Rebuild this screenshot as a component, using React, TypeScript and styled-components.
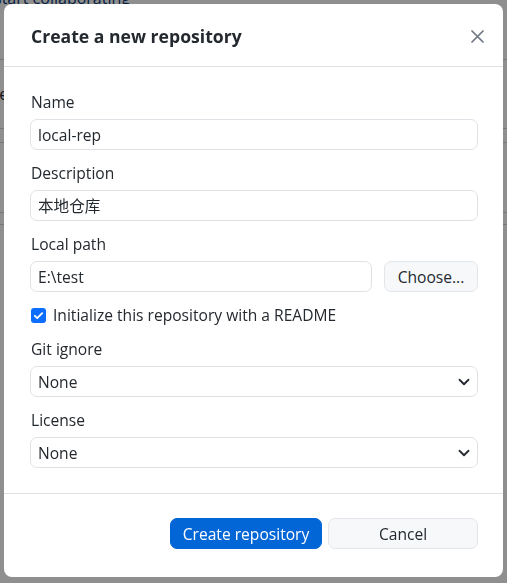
import React from "react";
import styled, { createGlobalStyle } from "styled-components";

const Global = createGlobalStyle`
  html, body { margin: 0; padding: 0; }
  body {
    font-family: "Open Sans", "Noto Sans", "Noto Sans CJK SC", sans-serif;
    color: #24292f;
    background: #fff;
    width: 507px;
    height: 583px;
    overflow: hidden;
  }
  * { box-sizing: border-box; }
`;

const FONT = `"Open Sans", "Noto Sans", "Noto Sans CJK SC", sans-serif`;

const Page = styled.div`
  width: 507px;
  height: 583px;
  overflow: hidden;
`;

const PageHead = styled.div`
  margin: -12px 0 0 -6px;
  font-size: 16px;
  line-height: 20px;
  color: #0b3b74;
`;

const PageList = styled.div`
  margin-top: 51px;
  margin-left: -20px;
  display: flex;
  flex-direction: column;
`;

const PageItem = styled.div<{ $h: number }>`
  height: ${(p) => p.$h}px;
  border-top: 1px solid #d0d7de;
  font-size: 16px;
  display: flex;
  align-items: center;
`;

const Overlay = styled.div`
  position: fixed;
  inset: 0;
  background: rgba(0, 0, 0, 0.44);
  padding: 4px 4px 6px 4px;
  display: flex;
`;

const Dialog = styled.div`
  flex: 1;
  background: #fff;
  border-radius: 8px;
  display: flex;
  flex-direction: column;
  overflow: hidden;
`;

const Header = styled.div`
  height: 63px;
  border-bottom: 1px solid #dde1e5;
  display: flex;
  align-items: center;
  justify-content: space-between;
  padding: 2px 16px 0 27px;
`;

const Title = styled.h1`
  margin: 0;
  font-size: 17.6px;
  font-weight: 700;
  color: #24292f;
`;

const CloseButton = styled.button`
  border: 0;
  background: transparent;
  padding: 0;
  width: 20px;
  height: 20px;
  display: flex;
  align-items: center;
  justify-content: center;
  color: #6e7781;
`;

const Body = styled.div`
  flex: 1;
  padding: 23px 25px 0 26px;
  display: flex;
  flex-direction: column;
`;

const Field = styled.div`
  display: flex;
  flex-direction: column;
  margin-bottom: 11px;
`;

const Label = styled.label`
  font-size: 15.6px;
  line-height: 24px;
  margin: 0 0 5px 1px;
  color: #24292f;
`;

const Input = styled.input`
  height: 31px;
  width: 100%;
  border: 1px solid #dee2e6;
  border-radius: 7px;
  padding: 0 7px;
  font-family: ${FONT};
  font-size: 15.6px;
  color: #24292f;
  outline: none;
  min-width: 0;
`;

const Row = styled.div`
  display: flex;
  gap: 12px;
`;

const PathInput = styled(Input)`
  flex: 1;
  width: auto;
`;

const ChooseButton = styled.button`
  width: 94px;
  height: 31px;
  flex: none;
  border: 1px solid #e2e6ea;
  border-radius: 7px;
  background: #f6f8fa;
  font-family: ${FONT};
  font-size: 15.6px;
  color: #24292f;
  padding: 0;
`;

const CheckRow = styled.label`
  display: flex;
  align-items: center;
  gap: 7px;
  font-size: 15.6px;
  line-height: 24px;
  margin: 0 0 10px 1px;
`;

const CheckBox = styled.span`
  width: 15px;
  height: 15px;
  border-radius: 3px;
  background: #0d6efd;
  display: flex;
  align-items: center;
  justify-content: center;
`;

const SelectWrap = styled.div`
  position: relative;
  display: flex;
`;

const Select = styled.select`
  appearance: none;
  flex: 1;
  height: 31px;
  border: 1px solid #dee2e6;
  border-radius: 7px;
  padding: 0 7px;
  background: #fff;
  font-family: ${FONT};
  font-size: 15.6px;
  color: #24292f;
  outline: none;
`;

const Chevron = styled.svg`
  position: absolute;
  right: 8px;
  top: 10px;
  pointer-events: none;
`;

const Footer = styled.div`
  height: 84px;
  border-top: 1px solid #dde1e5;
  display: flex;
  justify-content: flex-end;
  align-items: flex-start;
  gap: 6px;
  padding: 24px 25px 0 0;
`;

const Button = styled.button<{ $primary?: boolean }>`
  height: 31px;
  width: ${(p) => (p.$primary ? 152 : 150)}px;
  border-radius: 7px;
  border: 1px solid ${(p) => (p.$primary ? "#0366d6" : "#e2e6ea")};
  background: ${(p) => (p.$primary ? "#0366d6" : "#f6f8fa")};
  color: ${(p) => (p.$primary ? "#fff" : "#24292f")};
  font-family: ${FONT};
  font-size: 15.6px;
  padding: 0;
`;

const SelectField = ({ label }: { label: string }) => (
  <Field>
    <Label>{label}</Label>
    <SelectWrap>
      <Select defaultValue="None">
        <option>None</option>
      </Select>
      <Chevron width="12" height="12" viewBox="0 0 16 16">
        <path d="M2 5l6 6 6-6" fill="none" stroke="#24292f" strokeWidth="2.4" strokeLinecap="round" strokeLinejoin="round" />
      </Chevron>
    </SelectWrap>
  </Field>
);

export default function App() {
  return (
    <>
      <Global />
      <Page>
        <PageHead>start collaborating</PageHead>
        <PageList>
          <PageItem $h={69}>Use</PageItem>
          <PageItem $h={14} />
          <PageItem $h={70}>au</PageItem>
          <PageItem $h={12} />
          <PageItem $h={72}>gn</PageItem>
        </PageList>
      </Page>
      <Overlay>
        <Dialog>
          <Header>
            <Title>Create a new repository</Title>
            <CloseButton aria-label="Close">
              <svg width="13" height="13" viewBox="0 0 13 13">
                <path d="M1 1l11 11M12 1L1 12" stroke="#6e7781" strokeWidth="1.7" strokeLinecap="round" />
              </svg>
            </CloseButton>
          </Header>
          <Body>
            <Field>
              <Label>Name</Label>
              <Input defaultValue="local-rep" />
            </Field>
            <Field>
              <Label>Description</Label>
              <Input defaultValue="本地仓库" />
            </Field>
            <Field>
              <Label>Local path</Label>
              <Row>
                <PathInput defaultValue="E:\test" />
                <ChooseButton>Choose...</ChooseButton>
              </Row>
            </Field>
            <CheckRow>
              <CheckBox>
                <svg width="11" height="11" viewBox="0 0 12 12">
                  <path d="M2 6.3l2.6 2.6L10 3.4" fill="none" stroke="#fff" strokeWidth="2" strokeLinecap="round" strokeLinejoin="round" />
                </svg>
              </CheckBox>
              Initialize this repository with a README
            </CheckRow>
            <SelectField label="Git ignore" />
            <SelectField label="License" />
          </Body>
          <Footer>
            <Button $primary>Create repository</Button>
            <Button>Cancel</Button>
          </Footer>
        </Dialog>
      </Overlay>
    </>
  );
}
